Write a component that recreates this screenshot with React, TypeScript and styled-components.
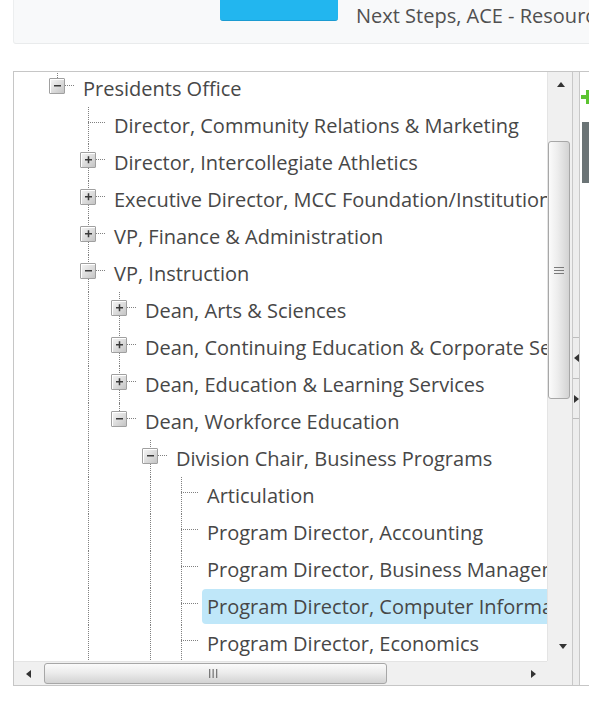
import React from 'react';
import styled, { createGlobalStyle } from 'styled-components';

const ROW_H = 37;
const INDENT = 31;
const BASE = 36;

const GlobalStyle = createGlobalStyle`
  html, body {
    margin: 0;
    padding: 0;
    background: #fff;
  }
  body {
    font-family: "Open Sans", "Liberation Sans", sans-serif;
    color: #474747;
  }
`;

const Page = styled.div`
  width: 589px;
  height: 707px;
  overflow: hidden;
`;

const StepsCard = styled.div`
  margin-left: 13px;
  height: 44px;
  box-sizing: border-box;
  display: flex;
  align-items: flex-start;
  padding-left: 206px;
  background: #f8f9fa;
  border-left: 1px solid #eceeef;
  border-bottom: 1px solid #e9ebec;
  border-bottom-left-radius: 3px;
  overflow: hidden;
`;

const StepButton = styled.div`
  flex: none;
  width: 118px;
  height: 21px;
  box-sizing: border-box;
  background: #22b6ef;
  border-bottom: 1px solid #1b9bd1;
  border-radius: 0 0 3px 3px;
`;

const StepLabel = styled.span`
  margin-left: 18px;
  margin-top: 4px;
  font-size: 20px;
  line-height: 24px;
  white-space: nowrap;
  color: #505050;
`;

const Panel = styled.div`
  margin: 27px 0 0 13px;
  height: 615px;
  box-sizing: border-box;
  display: flex;
  border-top: 1px solid #c6c6c6;
  border-bottom: 1px solid #c6c6c6;
  border-left: 1px solid #c6c6c6;
`;

const TreePane = styled.div`
  flex: none;
  width: 558px;
  display: grid;
  grid-template-columns: 1fr 25px;
  grid-template-rows: 1fr 24px;
`;

const TreeView = styled.div`
  position: relative;
  overflow: hidden;
`;

const TreeList = styled.div`
  margin-top: -2px;
`;

const Row = styled.div<{ $depth: number }>`
  position: relative;
  height: ${ROW_H}px;
  display: flex;
  align-items: center;
  padding-left: ${(p) => BASE + p.$depth * INDENT}px;
  white-space: nowrap;
`;

const GuideV = styled.span<{ $slot: number; $half?: boolean }>`
  position: absolute;
  left: ${(p) => BASE + p.$slot * INDENT + 7}px;
  top: 0;
  height: ${(p) => (p.$half ? 'calc(50% - 3px)' : '100%')};
  border-left: 1px dotted #808080;
`;

const GuideH = styled.span<{ $slot: number }>`
  position: absolute;
  left: ${(p) => BASE + p.$slot * INDENT + 7}px;
  top: calc(50% - 4px);
  width: 17px;
  border-top: 1px dotted #808080;
`;

const Expander = styled.span`
  position: relative;
  z-index: 1;
  flex: none;
  width: 16px;
  height: 16px;
  margin-top: -6px;
  margin-left: -1px;
  box-sizing: border-box;
  border: 1px solid #a0a0a0;
  border-radius: 1px;
  background: linear-gradient(135deg, #f6f6f6 0%, #dedede 50%, #c4c4c4 100%);
  box-shadow: inset 1px 1px 0 #fff;
  display: flex;
  align-items: center;
  justify-content: center;
`;

const LeafSlot = styled.span`
  flex: none;
  width: 15px;
`;

const Label = styled.span<{ $selected?: boolean }>`
  margin-left: 13px;
  padding: 0 5px;
  height: 35px;
  line-height: 35px;
  font-size: 20px;
  border-radius: 4px;
  background: ${(p) => (p.$selected ? '#bfe7f9' : 'transparent')};
`;

const ScrollV = styled.div`
  grid-column: 2;
  grid-row: 1;
  display: flex;
  flex-direction: column;
  background: #f0f0f0;
  border-left: 1px solid #e4e4e4;
`;

const ScrollH = styled.div`
  grid-column: 1;
  grid-row: 2;
  display: flex;
  align-items: center;
  background: #f0f0f0;
  border-top: 1px solid #e4e4e4;
`;

const ScrollCorner = styled.div`
  grid-column: 2;
  grid-row: 2;
  background: #f0f0f0;
`;

const ArrowBox = styled.div<{ $size: number }>`
  flex: none;
  width: ${(p) => p.$size}px;
  height: ${(p) => p.$size}px;
  display: flex;
  align-items: center;
  justify-content: center;
`;

const Track = styled.div`
  flex: 1;
  display: flex;
`;

const ThumbV = styled.div`
  margin: 44px 1px 0 0;
  width: 22px;
  height: 258px;
  box-sizing: border-box;
  border: 1px solid #a7a7a7;
  border-radius: 3px;
  background: linear-gradient(to right, #fbfbfb 0%, #ececec 45%, #d3d3d3 100%);
  display: flex;
  align-items: center;
  justify-content: center;
`;

const ThumbH = styled.div`
  margin-left: 2px;
  width: 343px;
  height: 21px;
  box-sizing: border-box;
  border: 1px solid #a7a7a7;
  border-radius: 3px;
  background: linear-gradient(to bottom, #fbfbfb 0%, #ececec 45%, #d3d3d3 100%);
  display: flex;
  align-items: center;
  justify-content: center;
  padding-right: 5px;
`;

const Splitter = styled.div`
  flex: none;
  width: 8px;
  box-sizing: border-box;
  background: #ededed;
  border-left: 1px solid #c8c8c8;
  border-right: 1px solid #c8c8c8;
  padding-top: 265px;
`;

const CollapseButton = styled.div`
  height: 41px;
  box-sizing: border-box;
  border-top: 1px solid #bdbdbd;
  display: flex;
  align-items: center;
  justify-content: center;

  &:last-child {
    border-bottom: 1px solid #bdbdbd;
  }
`;

const DetailPane = styled.div`
  flex: 1;
  overflow: hidden;
  background: #fff;
  padding-top: 15px;
`;

const AddIcon = styled.div`
  margin-left: 1px;
  height: 14px;
`;

const DetailHeader = styled.div`
  margin: 21px 0 0 2px;
  height: 61px;
  background: #6b7476;
`;

type TreeNode = {
  label: string;
  children?: TreeNode[];
  expanded?: boolean;
  selected?: boolean;
};

const orgChart: TreeNode[] = [
  {
    label: 'Presidents Office',
    expanded: true,
    children: [
      { label: 'Director, Community Relations & Marketing' },
      { label: 'Director, Intercollegiate Athletics', children: [] },
      { label: 'Executive Director, MCC Foundation/Institutional Advancement', children: [] },
      { label: 'VP, Finance & Administration', children: [] },
      {
        label: 'VP, Instruction',
        expanded: true,
        children: [
          { label: 'Dean, Arts & Sciences', children: [] },
          { label: 'Dean, Continuing Education & Corporate Services', children: [] },
          { label: 'Dean, Education & Learning Services', children: [] },
          {
            label: 'Dean, Workforce Education',
            expanded: true,
            children: [
              {
                label: 'Division Chair, Business Programs',
                expanded: true,
                children: [
                  { label: 'Articulation' },
                  { label: 'Program Director, Accounting' },
                  { label: 'Program Director, Business Management' },
                  { label: 'Program Director, Computer Information Systems', selected: true },
                  { label: 'Program Director, Economics' },
                  { label: 'Program Director, Office Administration' },
                ],
              },
              { label: 'Division Chair, Health Programs', children: [] },
            ],
          },
        ],
      },
      { label: 'VP, Student Services', children: [] },
    ],
  },
];

type FlatRow = {
  node: TreeNode;
  depth: number;
  isLast: boolean;
  lines: boolean[];
};

const flatten = (nodes: TreeNode[], depth = 0, lines: boolean[] = []): FlatRow[] =>
  nodes.flatMap((node, i) => {
    const isLast = i === nodes.length - 1;
    const row: FlatRow = { node, depth, isLast, lines };
    const kids =
      node.expanded && node.children
        ? flatten(node.children, depth + 1, [...lines, !isLast])
        : [];
    return [row, ...kids];
  });

const ExpanderGlyph = ({ open }: { open: boolean }) => (
  <svg width='9' height='9' viewBox='0 0 9 9'>
    <rect x='1' y='4' width='7' height='1.5' fill='#3a3a3a' />
    {!open && <rect x='3.75' y='1.25' width='1.5' height='7' fill='#3a3a3a' />}
  </svg>
);

const Triangle = ({ dir }: { dir: 'up' | 'down' | 'left' | 'right' }) => {
  const points = {
    up: '0,5 4,0 8,5',
    down: '0,0 8,0 4,5',
    left: '5,0 5,8 0,4',
    right: '0,0 0,8 5,4',
  }[dir];
  const vertical = dir === 'up' || dir === 'down';
  return (
    <svg width={vertical ? 8 : 5} height={vertical ? 5 : 8}>
      <polygon points={points} fill='#333' />
    </svg>
  );
};

const Grip = ({ vertical }: { vertical: boolean }) => (
  <svg width='10' height='9' viewBox='0 0 10 9'>
    {[0, 1, 2].map((i) =>
      vertical ? (
        <rect key={i} x='0' y={1 + i * 3} width='10' height='1' fill='#7a7a7a' />
      ) : (
        <rect key={i} x={1 + i * 3.5} y='0' width='1.3' height='9' fill='#7a7a7a' />
      )
    )}
  </svg>
);

const TreeRow: React.FC<{ row: FlatRow }> = ({ row }) => {
  const { node, depth, isLast, lines } = row;
  const hasChildren = node.children !== undefined;
  return (
    <Row $depth={depth}>
      {lines.map((on, j) => (on ? <GuideV key={j} $slot={j} /> : null))}
      <GuideV $slot={depth} $half={isLast} />
      <GuideH $slot={depth} />
      {hasChildren ? (
        <Expander>
          <ExpanderGlyph open={!!node.expanded} />
        </Expander>
      ) : (
        <LeafSlot />
      )}
      <Label $selected={node.selected}>{node.label}</Label>
    </Row>
  );
};

export default function App() {
  const rows = flatten(orgChart);

  return (
    <Page>
      <GlobalStyle />
      <StepsCard>
        <StepButton />
        <StepLabel>Next Steps, ACE - Resources</StepLabel>
      </StepsCard>

      <Panel>
        <TreePane>
          <TreeView>
            <TreeList>
              {rows.map((row, i) => (
                <TreeRow key={i} row={row} />
              ))}
            </TreeList>
          </TreeView>

          <ScrollV>
            <ArrowBox $size={25}>
              <Triangle dir='up' />
            </ArrowBox>
            <Track>
              <ThumbV>
                <Grip vertical />
              </ThumbV>
            </Track>
            <ArrowBox $size={29}>
              <Triangle dir='down' />
            </ArrowBox>
          </ScrollV>

          <ScrollH>
            <ArrowBox $size={28}>
              <Triangle dir='left' />
            </ArrowBox>
            <Track>
              <ThumbH>
                <Grip vertical={false} />
              </ThumbH>
            </Track>
            <ArrowBox $size={28}>
              <Triangle dir='right' />
            </ArrowBox>
          </ScrollH>
          <ScrollCorner />
        </TreePane>

        <Splitter>
          <CollapseButton>
            <Triangle dir='left' />
          </CollapseButton>
          <CollapseButton>
            <Triangle dir='right' />
          </CollapseButton>
        </Splitter>

        <DetailPane>
          <AddIcon>
            <svg width='14' height='14' viewBox='0 0 14 14'>
              <rect x='0' y='5' width='14' height='4' fill='#5cc431' />
              <rect x='5' y='0' width='4' height='14' fill='#5cc431' />
            </svg>
          </AddIcon>
          <DetailHeader />
        </DetailPane>
      </Panel>
    </Page>
  );
}
